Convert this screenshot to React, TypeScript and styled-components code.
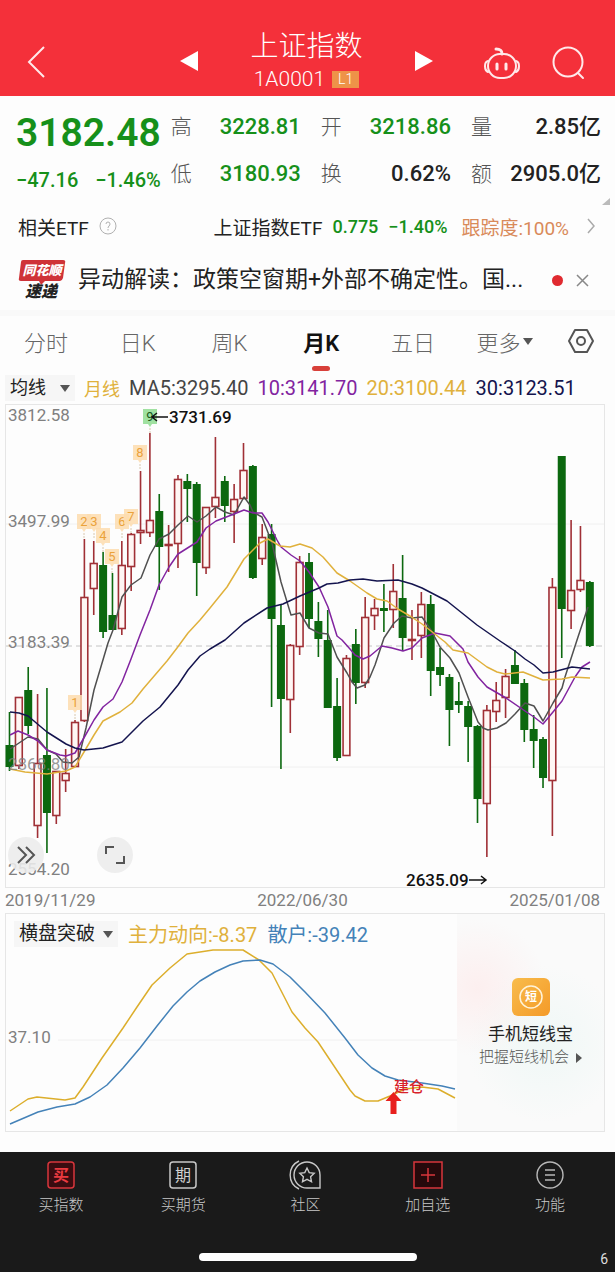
import React, { useState } from "react";
import styled, { createGlobalStyle, css } from "styled-components";

const GlobalStyle = createGlobalStyle`
  * { box-sizing: border-box; }
  body {
    margin: 0;
    background: #fdfdfd;
    color: #222;
    font-family: Roboto, "Noto Sans CJK SC", sans-serif;
  }
  button, select {
    margin: 0;
    padding: 0;
    border: 0;
    background: none;
    color: inherit;
    font: inherit;
    cursor: pointer;
  }
  a { color: inherit; text-decoration: none; }
  svg { display: block; overflow: visible; }
`;

const colors = {
  red: "#f4303a",
  green: "#16901a",
  gold: "#e0b13c",
  purple: "#8224a0",
  navy: "#14144e",
  blue: "#4482b8",
  line: "#e6e6e6",
};

/* ---------- header ---------- */

const Header = styled.header`
  display: grid;
  grid-template-columns: 1fr 254px 1fr;
  align-items: end;
  height: 96px;
  padding: 0 30px 3px 28px;
  background: ${colors.red};
  color: #fff;
`;

const IconButton = styled.button`
  display: flex;
  align-items: center;
  justify-content: center;
`;

const HeaderSide = styled.div<{ $end?: boolean }>`
  display: flex;
  align-items: center;
  justify-content: ${(p) => (p.$end ? "flex-end" : "flex-start")};
  gap: 32px;
  height: 62px;
`;

const Switcher = styled.div`
  display: flex;
  align-items: center;
  justify-content: space-between;
  height: 64px;
`;

const TitleBlock = styled.div`
  display: flex;
  flex-direction: column;
  align-items: center;
`;

const Title = styled.h1`
  margin: 0;
  font-size: 28px;
  font-weight: 300;
  line-height: 36px;
`;

const Code = styled.div`
  display: flex;
  align-items: center;
  gap: 7px;
  font-size: 21px;
  font-weight: 300;
  line-height: 28px;
`;

const LevelBadge = styled.span`
  padding: 0 6px;
  background: #ee9348;
  font-size: 14px;
  line-height: 17px;
`;

/* ---------- quote ---------- */

const Quote = styled.section`
  display: flex;
  gap: 10px;
  height: 102px;
  padding: 8px 14px 0 16px;
`;

const PriceColumn = styled.div`
  flex: 0 0 144px;
  color: ${colors.green};
`;

const Price = styled.div`
  font-size: 39px;
  font-weight: 600;
  line-height: 58px;
`;

const Change = styled.div`
  display: flex;
  justify-content: space-between;
  font-size: 20px;
  font-weight: 500;
  line-height: 36px;
`;

const Stats = styled.dl`
  display: grid;
  flex: 1;
  grid-template-columns: repeat(3, 1fr);
  column-gap: 20px;
  margin: 0;
`;

const Stat = styled.div`
  display: flex;
  justify-content: space-between;
  line-height: 46px;
`;

const StatLabel = styled.dt`
  color: #555;
  font-size: 21px;
  font-weight: 300;
`;

const StatValue = styled.dd<{ $down?: boolean }>`
  margin: 0;
  color: ${(p) => (p.$down ? colors.green : "#222")};
  font-size: 22px;
  font-weight: 500;
`;

const Corner = styled.div`
  display: flex;
  justify-content: flex-end;
  height: 8px;
  padding-right: 5px;
`;

/* ---------- ETF and news rows ---------- */

const EtfRow = styled.section`
  display: flex;
  align-items: center;
  justify-content: space-between;
  height: 40px;
  padding: 0 20px 0 18px;
  font-size: 19px;
`;

const EtfName = styled.div`
  display: flex;
  align-items: center;
  gap: 10px;
`;

const EtfLink = styled.a`
  display: flex;
  align-items: center;
  gap: 10px;
`;

const EtfQuote = styled.span`
  color: ${colors.green};
  font-size: 18px;
  font-weight: 500;
`;

const Tracking = styled.span`
  margin: 0 8px 0 4px;
  color: #d98a5a;
`;

const News = styled.section`
  display: flex;
  align-items: center;
  height: 64px;
  padding: 4px 26px 0 18px;
  font-size: 23px;
`;

const NewsText = styled.a`
  flex: 1;
  margin-left: 12px;
  overflow: hidden;
  line-height: 40px;
  white-space: nowrap;
`;

const Dot = styled.span`
  width: 11px;
  height: 11px;
  margin-right: 13px;
  border-radius: 50%;
  background: #e02a30;
`;

/* ---------- period tabs ---------- */

const Tabs = styled.nav`
  display: grid;
  grid-template-columns: repeat(6, 3fr) 2fr;
  height: 64px;
  padding: 0 3px 8px 0;
  border-top: 6px solid #f9f9f9;
`;

const Tab = styled.button<{ $active?: boolean }>`
  position: relative;
  display: flex;
  align-items: center;
  justify-content: center;
  gap: 3px;
  color: #666;
  font-size: 22px;
  font-weight: 300;
  ${(p) =>
    p.$active &&
    css`
      color: #111;
      font-weight: 600;
      &::after {
        content: "";
        position: absolute;
        bottom: -5px;
        width: 18px;
        height: 5px;
        border-radius: 3px;
        background: #d8403a;
      }
    `}
`;

/* ---------- indicator row ---------- */

const Averages = styled.div`
  display: flex;
  align-items: center;
  gap: 9px;
  height: 30px;
  padding: 0 5px 3px;
  font-size: 20px;
  white-space: nowrap;
`;

const PickerBox = styled.label<{ $size: number }>`
  display: flex;
  align-items: center;
  gap: 7px;
  height: 26px;
  padding: 0 5px;
  background: #f6f6f6;
  color: #222;
  font-size: ${(p) => p.$size}px;
  select {
    appearance: none;
    outline: none;
  }
`;

const Reading = styled.span<{ $color: string; $size?: number }>`
  color: ${(p) => p.$color};
  font-size: ${(p) => p.$size ?? 20}px;
`;

/* ---------- charts ---------- */

const ChartArea = styled.section`
  position: relative;
  margin: 0 10px 0 5px;
`;

const ChartTools = styled.div`
  position: absolute;
  bottom: 15px;
  left: 3px;
  display: flex;
  gap: 53px;
`;

const RoundButton = styled(IconButton)`
  width: 36px;
  height: 36px;
  border-radius: 50%;
  background: rgba(236, 236, 236, 0.88);
`;

const Dates = styled.div`
  display: flex;
  justify-content: space-between;
  height: 25px;
  padding: 0 15px 0 5px;
  color: #808080;
  font-size: 17px;
  line-height: 24px;
`;

const LowerPanel = styled.section`
  display: flex;
  margin: 0 10px 20px 5px;
  border: 1px solid ${colors.line};
`;

const Oscillator = styled.div`
  flex: 451;
  min-width: 0;
`;

const OscillatorHead = styled.div`
  display: flex;
  align-items: center;
  gap: 10px;
  height: 33px;
  padding: 6px 0 0 8px;
  font-size: 20px;
  white-space: nowrap;
`;

const Promo = styled.a`
  display: flex;
  flex: 147;
  flex-direction: column;
  align-items: center;
  min-width: 0;
  padding-top: 64px;
  background:
    radial-gradient(circle at 14% 34%, rgba(255, 228, 228, 0.5), transparent 36%),
    radial-gradient(circle at 60% 60%, rgba(232, 246, 243, 0.6), transparent 50%),
    #fafafa;
`;

const PromoTitle = styled.strong`
  margin-top: 5px;
  font-size: 17px;
  font-weight: 400;
  line-height: 26px;
`;

const PromoText = styled.span`
  display: flex;
  align-items: center;
  gap: 7px;
  color: #555;
  font-size: 15px;
  font-weight: 300;
  line-height: 21px;
`;

/* ---------- bottom bar ---------- */

const BottomBar = styled.footer`
  position: relative;
  height: 120px;
  background: #1a1a1a;
  color: #c8c8c8;
`;

const BottomNav = styled.nav`
  display: grid;
  grid-template-columns: repeat(5, 1fr);
  height: 101px;
  padding: 8px 4px 0 0;
`;

const NavItem = styled.a`
  display: flex;
  flex-direction: column;
  align-items: center;
  gap: 3px;
  font-size: 15px;
  font-weight: 300;
  line-height: 24px;
`;

const HomeBar = styled.div`
  width: 218px;
  height: 8px;
  margin: 0 auto;
  border-radius: 4px;
  background: #fff;
`;

const PageMark = styled.span`
  position: absolute;
  right: 7px;
  bottom: 5px;
  color: #ddd;
  font-size: 14px;
`;

/* ---------- data ---------- */

// Each bar: direction (1 up, 0 down), high, body top, body bottom, low.
const bars: number[][] = [
  [0, 712, 745, 767, 771], [1, 697, 697, 766, 769], [0, 667, 690, 726, 734],
  [1, 694, 763, 826, 838], [0, 688, 755, 813, 853], [1, 771, 771, 816, 824],
  [1, 749, 773, 781, 792], [1, 720, 722, 767, 767], [1, 539, 597, 721, 722],
  [1, 541, 563, 589, 615], [0, 552, 565, 632, 638], [0, 573, 615, 630, 630],
  [1, 541, 565, 629, 635], [1, 533, 534, 567, 591], [1, 471, 530, 533, 544],
  [1, 433, 520, 533, 537], [0, 494, 511, 547, 590], [1, 525, 544, 545, 572],
  [1, 475, 479, 544, 568], [0, 474, 481, 489, 522], [0, 482, 484, 563, 596],
  [1, 507, 507, 568, 574], [1, 437, 497, 507, 518], [0, 476, 481, 506, 522],
  [1, 484, 499, 512, 543], [1, 443, 470, 499, 499], [0, 465, 466, 578, 579],
  [1, 524, 537, 559, 565], [0, 524, 534, 619, 707], [0, 604, 625, 699, 769],
  [1, 644, 645, 700, 733], [1, 556, 562, 647, 655], [0, 553, 562, 619, 628],
  [0, 602, 621, 639, 657], [0, 610, 640, 708, 708], [0, 678, 706, 758, 761],
  [1, 655, 658, 756, 756], [0, 629, 644, 683, 704], [1, 597, 617, 683, 688],
  [1, 599, 608, 616, 630], [0, 584, 608, 611, 632], [1, 564, 591, 610, 628],
  [0, 555, 598, 638, 651], [1, 610, 639, 641, 660], [1, 592, 604, 636, 658],
  [0, 595, 604, 671, 696], [0, 648, 667, 675, 686], [0, 674, 677, 710, 746],
  [0, 682, 701, 705, 713], [0, 701, 706, 727, 762], [0, 725, 726, 799, 823],
  [1, 705, 710, 804, 857], [1, 682, 700, 712, 722], [1, 669, 676, 698, 718],
  [0, 650, 665, 684, 684], [0, 679, 683, 730, 742], [0, 715, 729, 741, 768],
  [0, 737, 739, 778, 788], [1, 578, 587, 781, 836], [0, 456, 456, 609, 658],
  [1, 520, 590, 611, 629], [1, 526, 580, 590, 592], [0, 581, 582, 646, 647],
];

const ma5 =
  "10,749 19,743 28,737 38,739 47,750 56,754 63,762 72,763 79,757 86,728 94,690 108,643 113,630 122,597 131,585 141,578 150,555 159,539 169,534 178,525 188,516 197,522 206,516 216,507 225,512 234,515 244,497 250,505 253,512 262,517 272,543 281,582 291,615 300,613 309,628 319,633 328,634 337,657 347,673 352,682 357,688 365,685 370,677 375,665 384,638 394,623 402,616 412,618 422,617 431,630 440,647 450,658 459,673 468,697 478,722 483,728 488,730 497,728 506,723 515,714 525,703 534,706 543,721 553,703 562,688 565,677 578,637 588,607";
const ma10 =
  "10,735 18,731 28,735 38,741 47,750 60,755 66,756 75,753 85,736 94,720 103,707 113,699 122,682 131,659 140,635 150,610 159,585 169,567 178,554 197,542 206,528 216,521 234,514 244,510 253,513 262,513 268,522 277,540 281,547 291,555 300,561 309,572 319,587 328,607 337,636 342,640 350,649 355,655 363,659 370,656 382,646 392,648 403,651 412,648 422,638 435,633 450,636 463,649 468,662 478,677 487,687 506,698 525,711 534,717 543,724 553,712 562,701 575,677 582,667 590,662";
const ma20 =
  "10,769 25,772 47,774 66,771 75,767 84,752 94,735 103,721 120,712 132,703 143,689 167,661 177,648 188,633 200,620 210,608 227,587 244,559 260,543 268,539 280,546 290,547 300,544 312,548 323,557 337,573 350,581 367,593 377,599 387,601 398,609 410,616 422,624 431,631 445,642 453,650 468,653 487,667 497,672 505,674 523,672 543,680 562,679 572,677 590,678";
const ma30 =
  "10,712 19,713 28,716 47,732 66,744 75,748 84,750 103,748 122,742 143,721 160,707 178,685 188,670 200,656 210,649 225,640 244,623 267,608 283,604 300,596 319,588 327,584 338,583 350,580 363,579 377,581 398,580 412,584 422,588 447,601 477,625 500,641 515,651 525,659 534,665 543,673 553,672 572,667 590,669";

const mainForce =
  "10,1111 28,1099 37,1097 65,1100 75,1098 83,1087 102,1058 123,1028 137,1007 152,985 170,968 187,954 213,950 243,950 259,960 272,973 292,1012 305,1028 318,1042 330,1060 342,1078 350,1090 355,1096 365,1101 378,1101 390,1096 405,1089 422,1087 438,1089 455,1098";
const retail =
  "10,1124 38,1112 57,1107 75,1104 90,1097 107,1085 123,1068 140,1048 157,1026 173,1006 187,992 200,981 215,972 230,965 243,961 260,960 273,964 290,977 305,992 325,1013 345,1038 358,1055 372,1068 385,1076 398,1080 422,1083 442,1086 455,1089";

const markers: [string, number, number][] = [
  ["1", 75, 703], ["2", 84, 522], ["3", 94, 522], ["4", 103, 536],
  ["5", 112, 557], ["6", 122, 522], ["7", 131, 517], ["8", 140, 453], ["9", 150, 417],
];

const stats: { label: string; value: string; down?: boolean }[] = [
  { label: "高", value: "3228.81", down: true },
  { label: "开", value: "3218.86", down: true },
  { label: "量", value: "2.85亿" },
  { label: "低", value: "3180.93", down: true },
  { label: "换", value: "0.62%" },
  { label: "额", value: "2905.0亿" },
];

/* ---------- icons ---------- */

const Caret = () => (
  <svg width="10" height="8" viewBox="0 0 10 8" aria-hidden="true">
    <path d="M0 1h10L5 8z" fill="#555" />
  </svg>
);

const Robot = () => (
  <svg width="36" height="33" viewBox="0 0 36 33" fill="none" stroke="#ffe9ea" strokeWidth="2">
    <rect x="4" y="8" width="28" height="24" rx="12" />
    <path d="M4 15c-4 1-4 9 0 11M32 15c4 1 4 9 0 11" strokeLinecap="round" />
    <path d="M18 8c0-4-2-5-6-5" strokeWidth="3" strokeLinecap="round" />
    <path d="M13 18v5M22 18v5" strokeWidth="3" strokeLinecap="round" />
  </svg>
);

const Search = () => (
  <svg width="33" height="33" viewBox="0 0 33 33" fill="none" stroke="#ffe9ea" strokeWidth="2">
    <circle cx="16" cy="16" r="14.500" />
    <path d="M26 27l5 5" strokeLinecap="round" />
  </svg>
);

const Express = () => (
  <svg width="48" height="42" viewBox="0 0 48 42" role="img" aria-label="同花顺速递">
    <path d="M5 1h40q3 0 2 3l-2 15q-1 3-3 3H27l-4 4-2-4H3q-3 0-2-3L3 3q0-2 2-2z" fill="#cf3338" />
    <g fontFamily="Noto Sans CJK SC, sans-serif" fontWeight="900" fontStyle="italic" textAnchor="middle">
      <text x="24" y="16" fontSize="13" fill="#fff">同花顺</text>
      <text x="23" y="38" fontSize="16" fill="#222">速递</text>
    </g>
  </svg>
);

const Boxed = ({ glyph, hot }: { glyph: string; hot?: boolean }) => (
  <svg width="28" height="30" viewBox="0 0 28 30">
    <rect
      x="1" y="2" width="26" height="26" rx="3"
      fill={hot ? "#3a0c10" : "none"}
      stroke={hot ? "#d8363c" : "#c8c8c8"}
      strokeWidth="1.500"
    />
    <text
      x="14" y="21" textAnchor="middle" fontSize="16"
      fontFamily="Noto Sans CJK SC, sans-serif"
      fontWeight={hot ? 700 : 400}
      fill={hot ? "#ea3a40" : "#d0d0d0"}
    >
      {glyph}
    </text>
  </svg>
);

const Community = () => (
  <svg width="32" height="30" viewBox="0 0 32 30" fill="none" stroke="#c8c8c8" strokeWidth="1.400">
    <path d="M18 2a13 13 0 0 1 13 13v13H18a13 13 0 0 1 0-26z" />
    <path d="M10 1a15.500 15.500 0 0 0 0 28" />
    <path d="M18 8l2.200 4.600 5 .7-3.600 3.500.9 5-4.500-2.400-4.500 2.400.9-5-3.600-3.500 5-.7z" />
  </svg>
);

const AddSquare = () => (
  <svg width="30" height="30" viewBox="0 0 30 30" fill="none" stroke="#d8363c" strokeWidth="1.500">
    <rect x="1" y="2" width="28" height="26" fill="#26090b" />
    <path d="M15 8v14M8 15h14" />
  </svg>
);

const Menu = () => (
  <svg width="30" height="30" viewBox="0 0 30 30" fill="none" stroke="#b8b8b8" strokeWidth="1.400">
    <circle cx="15" cy="15" r="13" />
    <path d="M10 10h10M10 15h10M10 20h10" />
  </svg>
);

/* ---------- chart drawings ---------- */

const Candles = () => (
  <svg viewBox="5 404 600 484" width="100%" role="img" aria-label="上证指数月K线">
    <rect x="5.500" y="404.500" width="599" height="483" fill="none" stroke={colors.line} />
    <path d="M6 524h598M6 767h598" stroke="#f0f0f0" />
    <path d="M6 646h598" stroke="#c4c4c4" strokeDasharray="6 4" />
    {bars.map(([up, high, top, bottom, low], i) => {
      const x = 9.5 + i * 9.36;
      return up ? (
        <g key={i} stroke="#a03036" strokeWidth="1.600">
          <path d={`M${x} ${high}V${top}M${x} ${bottom}V${low}`} />
          <rect x={x - 3.4} y={top + 0.5} width="6.800" height={Math.max(bottom - top - 1, 1)} fill="#fff6f4" />
        </g>
      ) : (
        <g key={i} fill="#0c680f">
          <rect x={x - 0.8} y={high} width="1.600" height={low - high} />
          <rect x={x - 4} y={top} width="8" height={bottom - top} />
        </g>
      );
    })}
    <g fill="none" strokeWidth="1.500" strokeLinejoin="round">
      <polyline points={ma5} stroke="#505050" />
      <polyline points={ma10} stroke={colors.purple} />
      <polyline points={ma20} stroke={colors.gold} />
      <polyline points={ma30} stroke={colors.navy} />
    </g>
    {markers.map(([n, x, y]) => (
      <g key={n}>
        <path
          d={`M${x - 7} ${y - 8}h14v15h-5l-2 3-2-3h-5z`}
          fill={n === "9" ? "#8fdc90" : "#fddcae"}
          fillOpacity="0.850"
        />
        <path d={`M${x} ${y + 11}v5`} stroke="#d8c8b0" strokeDasharray="2 1" />
        <text x={x} y={y + 4} textAnchor="middle" fontSize="13" fill={n === "9" ? "#185a18" : "#eba23a"}>
          {n}
        </text>
      </g>
    ))}
    <g fontSize="17" fill="#808080">
      <text x="8" y="421">3812.58</text>
      <text x="8" y="527">3497.99</text>
      <text x="8" y="648">3183.39</text>
      <text x="8" y="770" fillOpacity="0.800">2868.80</text>
      <text x="8" y="875">2554.20</text>
    </g>
    <g fontSize="17" fontWeight="500" fill="#111">
      <text x="169" y="423">3731.69</text>
      <text x="406" y="886">2635.09</text>
    </g>
    <path d="M168 417h-16m5-4l-5 4 5 4M469 880h17m-5-4l5 4-5 4" fill="none" stroke="#111" strokeWidth="1.500" />
  </svg>
);

const Waves = () => (
  <svg viewBox="6 947 451 184" width="100%" role="img" aria-label="横盘突破指标">
    <path d="M58 1040h399" stroke="#f0f0f0" />
    <g fill="none" strokeWidth="1.500" strokeLinejoin="round">
      <polyline points={mainForce} stroke="#dcae2c" />
      <polyline points={retail} stroke={colors.blue} />
    </g>
    <text x="8" y="1043" fontSize="17" fill="#808080">37.10</text>
    <text x="394" y="1092" fontSize="15" fontWeight="500" fill="#d8222a">建仓</text>
    <path d="M393.500 1092l8 9h-5v13h-6v-13h-5z" fill="#e8201e" />
  </svg>
);

const Picker = ({ name, options, size }: { name: string; options: string[]; size: number }) => (
  <PickerBox $size={size}>
    <select aria-label={name}>
      {options.map((o) => (
        <option key={o}>{o}</option>
      ))}
    </select>
    <Caret />
  </PickerBox>
);

const periods = ["分时", "日K", "周K", "月K", "五日"];

export default function App() {
  const [period, setPeriod] = useState("月K");

  return (
    <>
      <GlobalStyle />
      <Header>
        <HeaderSide>
          <IconButton aria-label="返回">
            <svg width="17" height="32" viewBox="0 0 17 32" fill="none" stroke="#ffe9ea" strokeWidth="2">
              <path d="M16 1L1 16l15 15" />
            </svg>
          </IconButton>
        </HeaderSide>
        <Switcher>
          <IconButton aria-label="上一个">
            <svg width="18" height="20" viewBox="0 0 18 20"><path d="M18 0v20L0 10z" fill="#fff" /></svg>
          </IconButton>
          <TitleBlock>
            <Title>上证指数</Title>
            <Code>1A0001 <LevelBadge>L1</LevelBadge></Code>
          </TitleBlock>
          <IconButton aria-label="下一个">
            <svg width="18" height="20" viewBox="0 0 18 20"><path d="M0 0v20l18-10z" fill="#fff" /></svg>
          </IconButton>
        </Switcher>
        <HeaderSide $end>
          <IconButton aria-label="智能助手"><Robot /></IconButton>
          <IconButton aria-label="搜索"><Search /></IconButton>
        </HeaderSide>
      </Header>

      <main>
        <Quote>
          <PriceColumn>
            <Price>3182.48</Price>
            <Change><span>−47.16</span><span>−1.46%</span></Change>
          </PriceColumn>
          <Stats>
            {stats.map((s) => (
              <Stat key={s.label}>
                <StatLabel>{s.label}</StatLabel>
                <StatValue $down={s.down}>{s.value}</StatValue>
              </Stat>
            ))}
          </Stats>
        </Quote>
        <Corner>
          <svg width="8" height="7" viewBox="0 0 8 7"><path d="M8 0v7H0z" fill="#bbb" /></svg>
        </Corner>

        <EtfRow>
          <EtfName>
            相关ETF
            <svg width="18" height="18" viewBox="0 0 18 18" fill="none" stroke="#b0b0b0">
              <circle cx="9" cy="9" r="8" />
              <path d="M7 7q0-2 2-2t2 2q0 1-1 2t-1 2M9 12v1.500" />
            </svg>
          </EtfName>
          <EtfLink href="#etf">
            <span>上证指数ETF</span>
            <EtfQuote>0.775</EtfQuote>
            <EtfQuote>−1.40%</EtfQuote>
            <Tracking>跟踪度:100%</Tracking>
            <svg width="8" height="16" viewBox="0 0 8 16" fill="none" stroke="#aaa" strokeWidth="1.500">
              <path d="M1 1l6 7-6 7" />
            </svg>
          </EtfLink>
        </EtfRow>

        <News>
          <Express />
          <NewsText href="#news">异动解读：政策空窗期+外部不确定性。国...</NewsText>
          <Dot />
          <IconButton aria-label="关闭">
            <svg width="13" height="13" viewBox="0 0 13 13" stroke="#888" strokeWidth="1.500">
              <path d="M1 1l11 11M12 1L1 12" />
            </svg>
          </IconButton>
        </News>

        <Tabs>
          {periods.map((p) => (
            <Tab key={p} $active={p === period} onClick={() => setPeriod(p)}>{p}</Tab>
          ))}
          <Tab aria-haspopup="menu">更多<Caret /></Tab>
          <IconButton aria-label="设置">
            <svg width="28" height="26" viewBox="0 0 28 26" fill="none" stroke="#555" strokeWidth="2">
              <path d="M8 2h12l6 11-6 11H8L2 13z" strokeLinejoin="round" />
              <circle cx="14" cy="13" r="4" />
            </svg>
          </IconButton>
        </Tabs>

        <Averages>
          <Picker name="主图指标" options={["均线", "BOLL"]} size={18} />
          <Reading $color={colors.gold} $size={18}>月线</Reading>
          <Reading $color="#444">MA5:3295.40</Reading>
          <Reading $color={colors.purple}>10:3141.70</Reading>
          <Reading $color={colors.gold}>20:3100.44</Reading>
          <Reading $color={colors.navy}>30:3123.51</Reading>
        </Averages>

        <ChartArea>
          <Candles />
          <ChartTools>
            <RoundButton aria-label="展开">
              <svg width="19" height="18" viewBox="0 0 19 18" fill="none" stroke="#555" strokeWidth="2">
                <path d="M1 1l8 8-8 8M9 1l8 8-8 8" />
              </svg>
            </RoundButton>
            <RoundButton aria-label="全屏">
              <svg width="20" height="18" viewBox="0 0 20 18" fill="none" stroke="#555" strokeWidth="2">
                <path d="M1 8V1h8M19 10v7h-8" />
              </svg>
            </RoundButton>
          </ChartTools>
        </ChartArea>
        <Dates>
          <time>2019/11/29</time>
          <time>2022/06/30</time>
          <time>2025/01/08</time>
        </Dates>

        <LowerPanel>
          <Oscillator>
            <OscillatorHead>
              <Picker name="副图指标" options={["横盘突破", "成交量"]} size={19} />
              <Reading $color={colors.gold}>主力动向:-8.37</Reading>
              <Reading $color={colors.blue}>散户:-39.42</Reading>
            </OscillatorHead>
            <Waves />
          </Oscillator>
          <Promo href="#short-line">
            <svg width="38" height="38" viewBox="0 0 38 38" aria-hidden="true">
              <defs>
                <linearGradient id="promo" x1="0" y1="0" x2="1" y2="1">
                  <stop offset="0" stopColor="#f8bc4c" />
                  <stop offset="1" stopColor="#f49a28" />
                </linearGradient>
              </defs>
              <rect width="38" height="38" rx="6" fill="url(#promo)" />
              <circle cx="19" cy="19" r="11" fill="none" stroke="#fff3d8" strokeWidth="1.500" />
              <text x="19" y="23" textAnchor="middle" fontSize="12" fontWeight="700" fill="#fff">短</text>
            </svg>
            <PromoTitle>手机短线宝</PromoTitle>
            <PromoText>
              把握短线机会
              <svg width="6" height="10" viewBox="0 0 6 10"><path d="M0 0l6 5-6 5z" fill="#555" /></svg>
            </PromoText>
          </Promo>
        </LowerPanel>
      </main>

      <BottomBar>
        <BottomNav>
          <NavItem href="#buy-index"><Boxed glyph="买" hot />买指数</NavItem>
          <NavItem href="#buy-futures"><Boxed glyph="期" />买期货</NavItem>
          <NavItem href="#community"><Community />社区</NavItem>
          <NavItem href="#add"><AddSquare />加自选</NavItem>
          <NavItem href="#more"><Menu />功能</NavItem>
        </BottomNav>
        <HomeBar />
        <PageMark>6</PageMark>
      </BottomBar>
    </>
  );
}
